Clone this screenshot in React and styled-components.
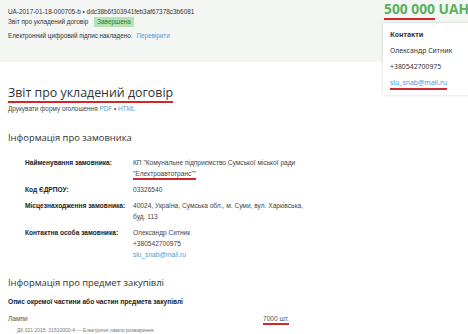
import styled, { createGlobalStyle } from 'styled-components';

const GlobalStyle = createGlobalStyle`
  html, body {
    margin: 0;
    padding: 0;
    background: #ffffff;
    overflow: hidden;
  }
  body {
    font-family: "Liberation Sans", Arial, sans-serif;
    color: #333;
  }
`;

const Page = styled.div`
  width: 468px;
  height: 334px;
  overflow: hidden;
  position: relative;
`;

const Header = styled.header`
  height: 62px;
  background: #f4f6f4;
  display: flex;
  justify-content: space-between;
  align-items: flex-start;
`;

const Meta = styled.div`
  padding: 7px 0 0 8px;
  color: #333;
`;

const MetaLine = styled.div`
  display: flex;
  align-items: center;
  gap: 4px;
  line-height: 10px;
  margin-top: ${(p) => p.$gap || 0}px;
  font-size: ${(p) => p.$size || 6.4}px;
`;

const Badge = styled.span`
  background: #b7e3b3;
  color: #2f7a33;
  padding: 0 3px;
  line-height: 10px;
  margin-left: 2px;
`;

const Link = styled.a`
  color: #3ea3d8;
  text-decoration: none;
`;

const Aside = styled.div`
  width: 85px;
  display: flex;
  flex-direction: column;
`;

const Price = styled.div`
  font-family: "Open Sans", sans-serif;
  font-weight: 700;
  font-size: 13.8px;
  line-height: 18px;
  color: #58b15b;
  white-space: nowrap;
  margin-left: 1px;
`;

const Mark = styled.span`
  border-bottom: 2px solid #d3272b;
  padding-bottom: ${(p) => p.$pad || 0}px;
`;

const Card = styled.div`
  margin-top: 5px;
  width: 110px;
  background: #fff;
  box-shadow: 0 0 3px rgba(0, 0, 0, 0.18);
  padding: 7px 0 7px 7px;
  font-family: "Noto Sans", sans-serif;
  font-size: 6.9px;
  color: #333;
  display: flex;
  flex-direction: column;
  gap: 6px;
  line-height: 10px;
  position: relative;
  z-index: 1;
`;

const CardTitle = styled.div`
  font-weight: 700;
`;

const Main = styled.main`
  padding: 0 8px;
`;

const Title = styled.h1`
  margin: 22px 0 0;
  font-family: "Open Sans", sans-serif;
  font-weight: 400;
  font-size: 12.4px;
  line-height: 18px;
  color: #333;
`;

const PrintLine = styled.div`
  margin-top: 2px;
  font-size: 6.4px;
  line-height: 10px;
  color: #444;
`;

const SectionTitle = styled.h2`
  margin: ${(p) => p.$top}px 0 0;
  font-family: "Open Sans", sans-serif;
  font-weight: 400;
  font-size: 9.4px;
  line-height: 14px;
  color: #333;
`;

const Rows = styled.div`
  margin-top: 12px;
  display: flex;
  flex-direction: column;
  gap: 5px;
`;

const Row = styled.div`
  display: grid;
  grid-template-columns: 108px 1fr;
  padding-left: 17px;
  font-size: 6.6px;
  line-height: 11px;
`;

const Label = styled.div`
  font-weight: 700;
  color: #222;
`;

const Value = styled.div`
  color: #444;
`;

const SubHead = styled.div`
  margin-top: 7px;
  font-weight: 700;
  font-size: 6.6px;
  line-height: 10px;
  color: #222;
`;

const ItemRow = styled.div`
  margin-top: 7px;
  display: grid;
  grid-template-columns: 255px 1fr;
  font-size: 6.6px;
  line-height: 10px;
  color: #555;
`;

const Classifier = styled.div`
  padding-left: 9px;
  margin-top: 2px;
  font-size: 5px;
  line-height: 8px;
  color: #777;
`;

export default function App() {
  return (
    <Page>
      <GlobalStyle />
      <Header>
        <Meta>
          <MetaLine>UA-2017-01-18-000705-b • ddc38b6f303941feb3af67378c3b6081</MetaLine>
          <MetaLine>
            Звіт про укладений договір <Badge>Завершена</Badge>
          </MetaLine>
          <MetaLine $gap={4} $size={6.3}>
            Електронний цифровий підпис накладено. <Link>Перевірити</Link>
          </MetaLine>
        </Meta>
        <Aside>
          <Price>
            <Mark>500 000</Mark> UAH
          </Price>
          <Card>
            <CardTitle>Контакти</CardTitle>
            <div>Олександр Ситник</div>
            <div>+380542700975</div>
            <div>
              <Link>
                <Mark $pad={1}>slu_snab@mail.ru</Mark>
              </Link>
            </div>
          </Card>
        </Aside>
      </Header>
      <Main>
        <Title>
          <Mark>Звіт про укладений договір</Mark>
        </Title>
        <PrintLine>
          Друкувати форму оголошення <Link>PDF</Link> • <Link>HTML</Link>
        </PrintLine>
        <SectionTitle $top={17}>Інформація про замовника</SectionTitle>
        <Rows>
          <Row>
            <Label>Найменування замовника:</Label>
            <Value>
              КП "Комунальне підприємство Сумської міської ради
              <br />
              <Mark $pad={1}>"Електроавтотранс""</Mark>
            </Value>
          </Row>
          <Row>
            <Label>Код ЄДРПОУ:</Label>
            <Value>03326540</Value>
          </Row>
          <Row>
            <Label>Місцезнаходження замовника:</Label>
            <Value>
              40024, Україна, Сумська обл., м. Суми, вул. Харківська,
              <br />
              буд. 113
            </Value>
          </Row>
          <Row>
            <Label>Контактна особа замовника:</Label>
            <Value>
              Олександр Ситник
              <br />
              +380542700975
              <br />
              <Link>slu_snab@mail.ru</Link>
            </Value>
          </Row>
        </Rows>
        <SectionTitle $top={16}>Інформація про предмет закупівлі</SectionTitle>
        <SubHead>Опис окремої частини або частин предмета закупівлі</SubHead>
        <ItemRow>
          <span>Лампи</span>
          <span>
            <Mark $pad={1}>7000 шт.</Mark>
          </span>
        </ItemRow>
        <Classifier>ДК 021:2015: 31510000-4 — Електричні лампи розжарення</Classifier>
      </Main>
    </Page>
  );
}
